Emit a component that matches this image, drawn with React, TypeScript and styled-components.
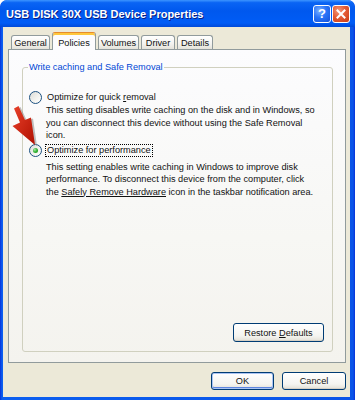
import styled, { createGlobalStyle } from "styled-components";

const GlobalStyle = createGlobalStyle`
  html, body {
    margin: 0;
    padding: 0;
    background: #ffffff;
  }
  body {
    font-family: "Liberation Sans", Arial, sans-serif;
  }
`;

const Window = styled.div`
  position: relative;
  width: 355px;
  height: 400px;
  display: flex;
  flex-direction: column;
  background: linear-gradient(90deg, #0831d9 0px, #0b5ff0 2px, #0a54e8 calc(100% - 2px), #0831d9 100%);
  border-radius: 7px 7px 0 0;
  overflow: hidden;
`;

const TitleBar = styled.div`
  flex: none;
  height: 27px;
  display: flex;
  align-items: center;
  justify-content: space-between;
  padding: 0 5px 0 6px;
  background: linear-gradient(
    180deg,
    #3d95ff 0%,
    #0a64f4 10%,
    #0058ee 40%,
    #005cf6 85%,
    #0049d8 100%
  );
  border-radius: 7px 7px 0 0;
`;

const Title = styled.span`
  color: #ffffff;
  font-size: 11px;
  font-weight: bold;
  text-shadow: 1px 1px 0 #0a1e80;
  white-space: nowrap;
`;

const Controls = styled.div`
  display: flex;
  gap: 1px;
`;

const CaptionButton = styled.div<{ $close?: boolean }>`
  width: 18px;
  height: 18px;
  box-sizing: border-box;
  border: 1px solid #ffffff;
  border-radius: 3px;
  display: flex;
  align-items: center;
  justify-content: center;
  color: #ffffff;
  font-size: 13px;
  font-weight: bold;
  background: ${(p) =>
    p.$close
      ? "radial-gradient(circle at 35% 30%, #f49a7c 0%, #e45c36 45%, #c93a12 100%)"
      : "radial-gradient(circle at 35% 30%, #7fb2ff 0%, #2a75f8 45%, #1550d8 100%)"};
`;

const Body = styled.div`
  flex: 1;
  margin: 0 5px 3px 3px;
  padding: 0 4px 7px 5px;
  background: #ece9d8;
  display: flex;
  flex-direction: column;
  min-height: 0;
`;

const TabRow = styled.div`
  flex: none;
  height: 22px;
  display: flex;
  align-items: flex-end;
  gap: 2px;
  padding-left: 3px;
  position: relative;
  z-index: 1;
`;

const Tab = styled.div<{ $w: number; $active?: boolean }>`
  width: ${(p) => p.$w}px;
  height: ${(p) => (p.$active ? 18 : 14)}px;
  margin-bottom: ${(p) => (p.$active ? -1 : 0)}px;
  box-sizing: border-box;
  border: 1px solid #919b9c;
  border-bottom: none;
  border-top-color: ${(p) => (p.$active ? "#e68b2c" : "#919b9c")};
  border-radius: 3px 3px 0 0;
  box-shadow: ${(p) => (p.$active ? "inset 0 2px 0 #ffc83c" : "none")};
  background: ${(p) =>
    p.$active ? "#fcfcfe" : "linear-gradient(180deg, #ffffff 0%, #f3f3ef 60%, #e4e2d9 100%)"};
  display: flex;
  align-items: center;
  justify-content: center;
  padding-top: ${(p) => (p.$active ? 2 : 0)}px;
  font-size: 9.2px;
  color: #111111;
`;

const Panel = styled.div`
  flex: 1;
  min-height: 0;
  box-sizing: border-box;
  border: 1px solid #919b9c;
  background: linear-gradient(180deg, #fcfcfe 0%, #f7f7f4 60%, #f4f3ee 100%);
  padding: 11px 12px 10px 13px;
  display: flex;
  flex-direction: column;
`;

const Group = styled.fieldset`
  flex: 1;
  min-width: 0;
  margin: 0;
  padding: 18px 8px 9px 6px;
  border: 1px solid #d0d0bf;
  border-radius: 3px;
  display: flex;
  flex-direction: column;
`;

const Legend = styled.legend`
  color: #0046d5;
  font-size: 9.2px;
  line-height: 12px;
  padding: 0 1px;
  margin-left: -1px;
`;

const Option = styled.div<{ $top?: number }>`
  display: flex;
  align-items: center;
  gap: 3px;
  min-height: 13px;
  margin-top: ${(p) => p.$top ?? 0}px;
`;

const Radio = styled.span<{ $checked?: boolean }>`
  flex: none;
  width: 13px;
  height: 13px;
  box-sizing: border-box;
  border: 1px solid #1c5180;
  border-radius: 50%;
  background: linear-gradient(135deg, #dcdcd7 0%, #f4f4f0 60%, #ffffff 100%);
  display: flex;
  align-items: center;
  justify-content: center;

  &::after {
    content: "";
    display: ${(p) => (p.$checked ? "block" : "none")};
    width: 5px;
    height: 5px;
    border-radius: 50%;
    background: radial-gradient(circle at 35% 35%, #a6e8a6 0%, #32b232 50%, #1c8f1c 100%);
  }
`;

const Label = styled.span<{ $focus?: boolean }>`
  font-size: 9.2px;
  line-height: 11px;
  color: #111111;
  white-space: nowrap;
  padding: 0 1px;
  border: 1px dotted ${(p) => (p.$focus ? "#000000" : "transparent")};
`;

const Desc = styled.div<{ $top?: number }>`
  margin: ${(p) => p.$top ?? 0}px 0 0 17px;
  font-size: 9.2px;
  line-height: 12.5px;
  color: #111111;
  white-space: nowrap;
`;

const Footer = styled.div`
  flex: none;
  display: flex;
  justify-content: flex-end;
  gap: 8px;
  padding-top: 9px;
`;

const Button = styled.button<{ $w: number; $h?: number; $default?: boolean }>`
  width: ${(p) => p.$w}px;
  height: ${(p) => p.$h ?? 18}px;
  box-sizing: border-box;
  padding: 0;
  border: 1px solid #003c74;
  border-radius: 3px;
  background: linear-gradient(180deg, #ffffff 0%, #f4f4f0 70%, #e3e0d6 100%);
  box-shadow: ${(p) =>
    p.$default
      ? "inset 0 0 0 1px #aac4f3, inset 0 -1px 0 1px #5e86e0"
      : "inset 0 -1px 0 #d6d0c5"};
  font-family: "Liberation Sans", Arial, sans-serif;
  font-size: 9.2px;
  color: #111111;
`;

const RestoreButton = styled(Button)`
  margin-top: auto;
  align-self: flex-end;
`;

const Link = styled.span`
  text-decoration: underline;
`;

const ArrowLayer = styled.svg`
  position: absolute;
  left: 0;
  top: 0;
  pointer-events: none;
`;

const ARROW = "14,108.5 18.5,106 25,120 31,117.5 35,145 12.5,126 20,122.5";

export default function App() {
  return (
    <>
      <GlobalStyle />
      <Window>
        <TitleBar>
          <Title>USB DISK 30X USB Device Properties</Title>
          <Controls>
            <CaptionButton>?</CaptionButton>
            <CaptionButton $close>
              <svg width="10" height="10" viewBox="0 0 10 10">
                <path d="M1.5 1.5 L8.5 8.5 M8.5 1.5 L1.5 8.5" stroke="#ffffff" strokeWidth="2" strokeLinecap="square" />
              </svg>
            </CaptionButton>
          </Controls>
        </TitleBar>
        <Body>
          <TabRow>
            <Tab $w={39}>General</Tab>
            <Tab $w={44} $active>
              Policies
            </Tab>
            <Tab $w={41}>Volumes</Tab>
            <Tab $w={34}>Driver</Tab>
            <Tab $w={36}>Details</Tab>
          </TabRow>
          <Panel>
            <Group>
              <Legend>Write caching and Safe Removal</Legend>
              <Option>
                <Radio />
                <Label>
                  Optimize for quick <u>r</u>emoval
                </Label>
              </Option>
              <Desc>
                This setting disables write caching on the disk and in Windows, so
                <br />
                you can disconnect this device without using the Safe Removal
                <br />
                icon.
              </Desc>
              <Option $top={2}>
                <Radio $checked />
                <Label $focus>Optimize for performance</Label>
              </Option>
              <Desc $top={4}>
                This setting enables write caching in Windows to improve disk
                <br />
                performance. To disconnect this device from the computer, click
                <br />
                the <Link>Safely Remove Hardware</Link> icon in the taskbar notification area.
              </Desc>
              <RestoreButton $w={91} $h={19}>
                Restore <u>D</u>efaults
              </RestoreButton>
            </Group>
          </Panel>
          <Footer>
            <Button $w={63} $default>
              OK
            </Button>
            <Button $w={64}>Cancel</Button>
          </Footer>
        </Body>
        <ArrowLayer width="50" height="160" viewBox="0 0 50 160">
          <defs>
            <linearGradient id="arrowRed" x1="0" y1="0" x2="1" y2="1">
              <stop offset="0" stopColor="#e8402a" />
              <stop offset="1" stopColor="#b01000" />
            </linearGradient>
          </defs>
          <polygon points={ARROW} fill="#8a8a8a" opacity="0.55" transform="translate(2 1)" />
          <polygon points={ARROW} fill="url(#arrowRed)" />
        </ArrowLayer>
      </Window>
    </>
  );
}
